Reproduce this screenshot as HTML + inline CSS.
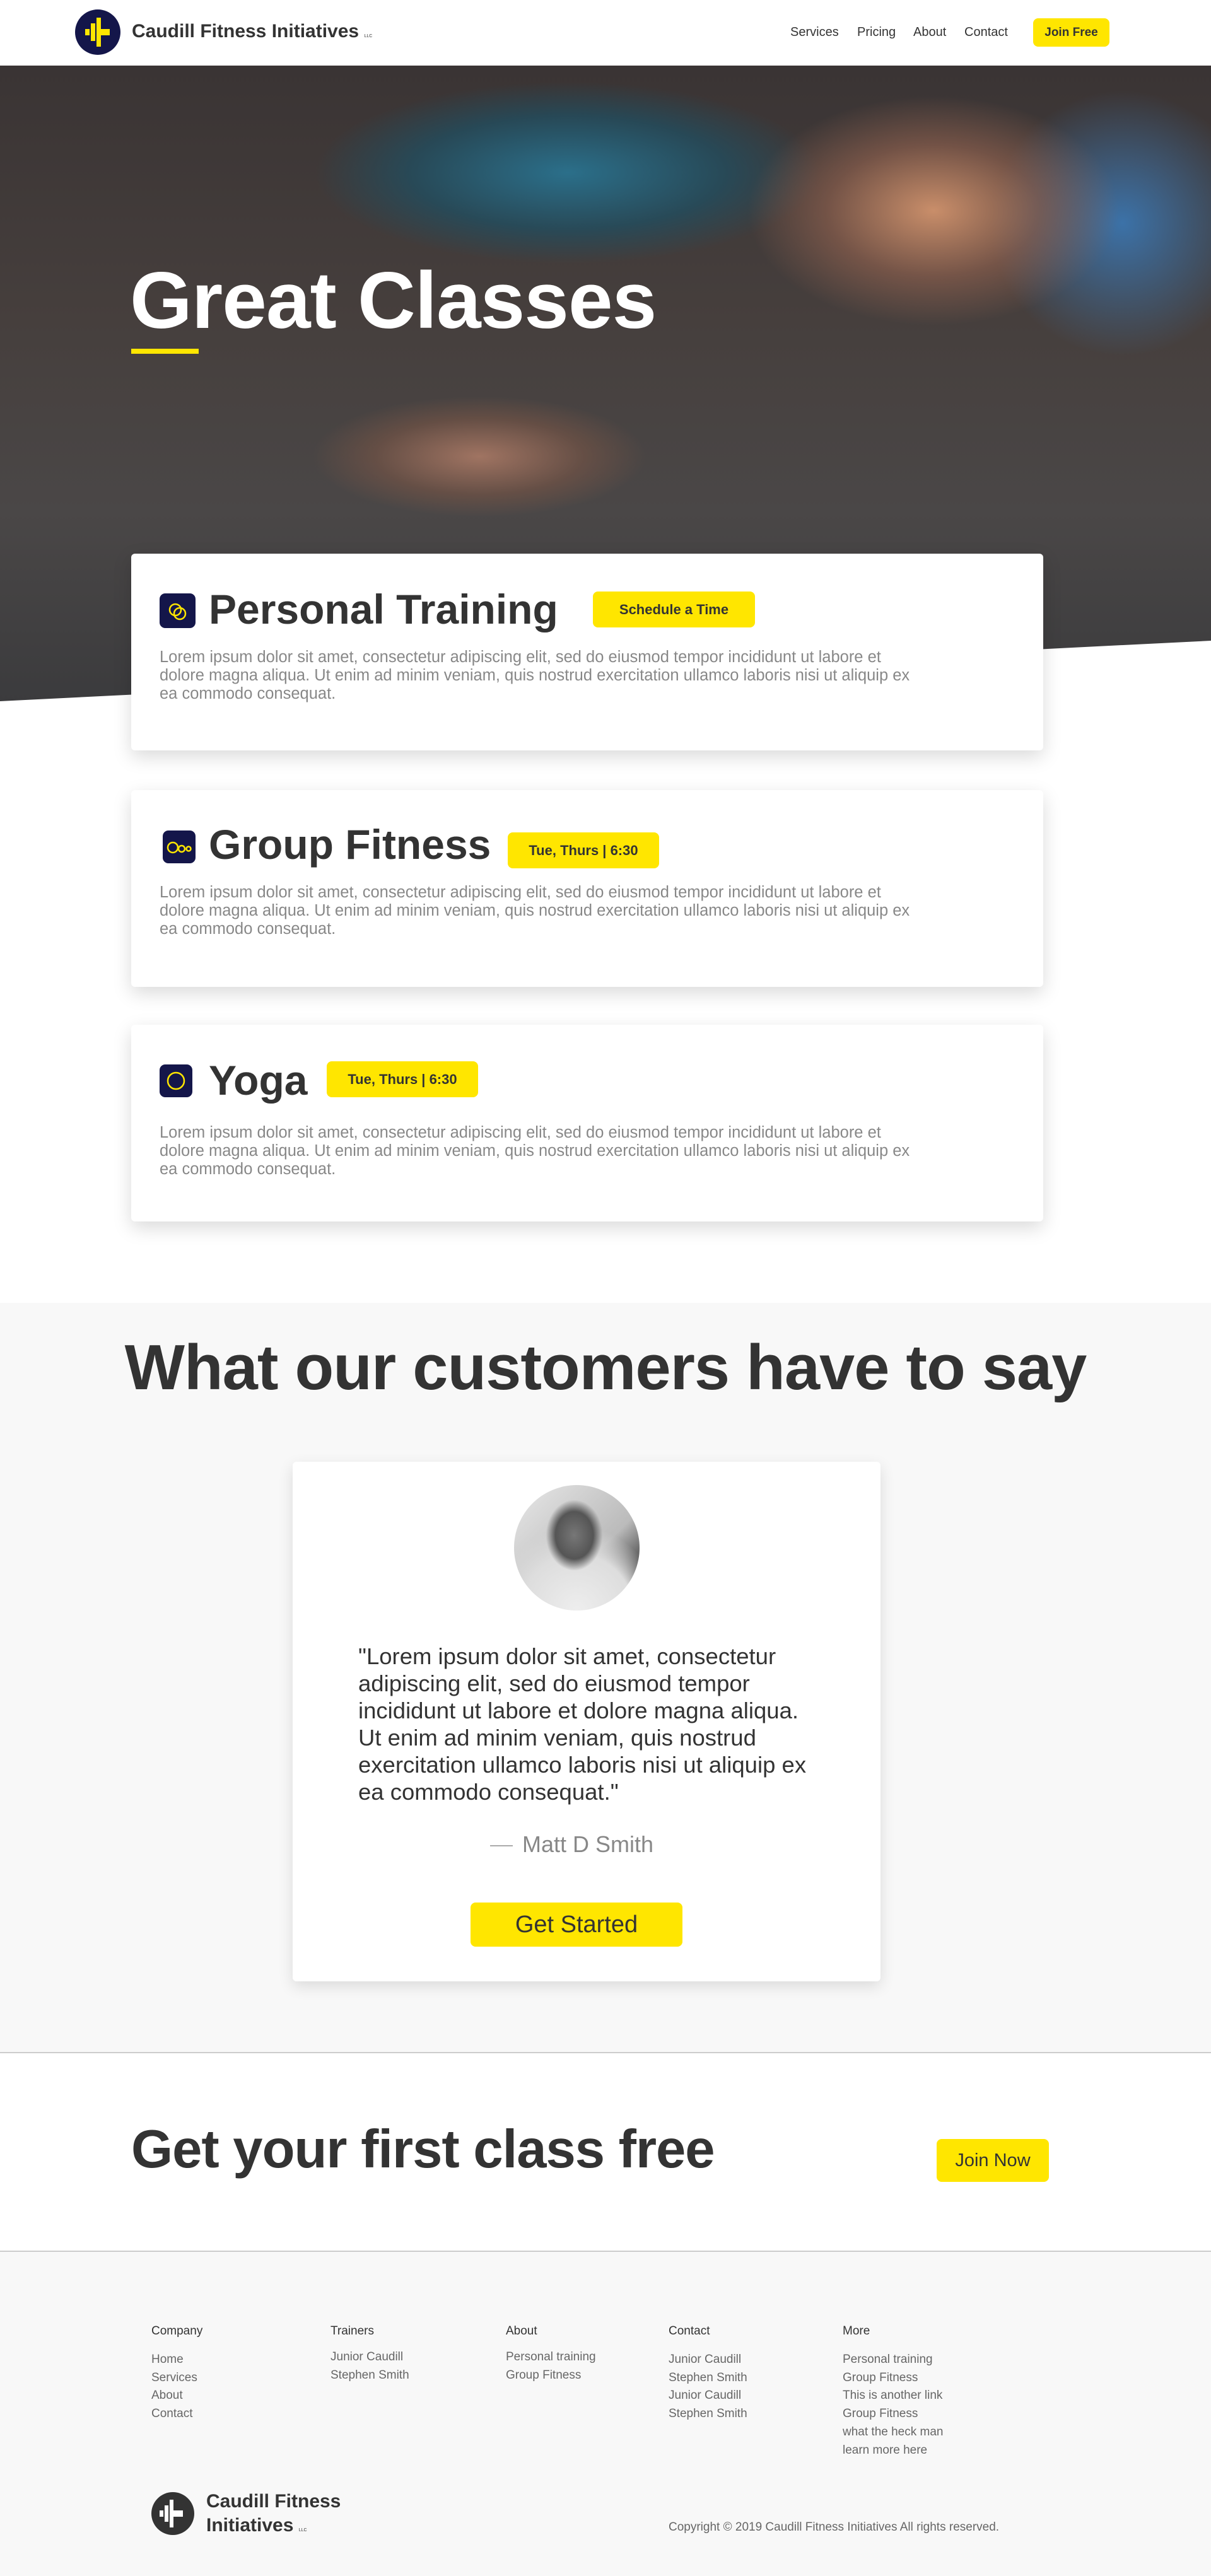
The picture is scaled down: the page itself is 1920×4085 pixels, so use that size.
<!DOCTYPE html>
<html><head><meta charset="utf-8">
<style>
*{margin:0;padding:0;box-sizing:border-box}
body{width:1920px;height:4085px;font-family:"Liberation Sans",sans-serif;color:#333;background:#fff;position:relative;overflow:hidden}
.abs{position:absolute}
.nav{left:0;top:0;width:1920px;height:104px;background:#fff}
.navlink{font-size:20px;color:#333;top:40px}
.btn{background:#ffe600;border-radius:8px;color:#333;display:flex;align-items:center;justify-content:center}
.hero{left:0;top:104px;width:1920px;height:1010px;clip-path:polygon(0 0,100% 0,100% 912px,0 1008px);
background:
radial-gradient(ellipse 420px 260px at 1480px 230px,#c98e6a 0%,rgba(150,100,80,.6) 40%,transparent 70%),
radial-gradient(ellipse 500px 180px at 900px 170px,#2b6f8a 0%,rgba(30,80,100,.7) 50%,transparent 80%),
radial-gradient(ellipse 330px 120px at 760px 620px,#a07462 0%,rgba(120,85,70,.6) 50%,transparent 80%),
radial-gradient(ellipse 300px 300px at 1780px 250px,#3c72a8 0%,transparent 70%),
linear-gradient(180deg,#3a3434 0%,#463f3d 40%,#4a4747 70%,#3b3b3d 100%)}
.card{left:208px;width:1446px;height:312px;background:#fff;border-radius:6px;box-shadow:0 10px 30px rgba(0,0,0,.15)}
.card h2{position:absolute;left:123px;font-size:66px;font-weight:bold;color:#333;line-height:1}
.card p{position:absolute;left:45px;top:150px;width:1200px;font-size:25.5px;line-height:29px;color:#888}
.icon{position:absolute;left:45px;width:57px;height:55px;background:#14164a;border-radius:9px}
.tag{position:absolute;height:57px;font-size:22px;font-weight:bold}
.foot h4{font-size:19px;font-weight:normal;color:#333;position:absolute}
.foot div.col{position:absolute;top:3728px;font-size:19px;line-height:28.7px;color:#666}
</style></head><body>
<div class="abs nav">
 <svg class="abs" style="left:119px;top:15px" width="72" height="72" viewBox="0 0 72 72"><circle cx="36" cy="36" r="36" fill="#14164a"/><rect x="16" y="31" width="7" height="10" fill="#ffe600"/><rect x="25" y="22" width="7" height="28" fill="#ffe600"/><rect x="34" y="13" width="7" height="46" fill="#ffe600"/><rect x="41" y="31" width="14" height="10" fill="#ffe600"/></svg>
 <div class="abs" style="left:209px;top:33px;font-size:30px;font-weight:bold;color:#333">Caudill Fitness Initiatives <span style="font-size:7px;font-weight:normal">LLC</span></div>
 <div class="abs navlink" style="left:1253px">Services</div>
 <div class="abs navlink" style="left:1359px">Pricing</div>
 <div class="abs navlink" style="left:1448px">About</div>
 <div class="abs navlink" style="left:1529px">Contact</div>
 <div class="abs btn" style="left:1638px;top:29px;width:121px;height:45px;font-size:19px;font-weight:bold">Join Free</div>
</div>
<div class="abs hero"></div>
<div class="abs" style="left:206px;top:403px;font-size:127px;font-weight:bold;color:#fff;letter-spacing:-1px">Great Classes</div>
<div class="abs" style="left:208px;top:553px;width:107px;height:8px;background:#ffe600"></div>

<div class="abs card" style="top:878px">
 <div class="icon" style="top:63px"><svg width="57" height="55"><circle cx="25" cy="26" r="9" fill="none" stroke="#ffe600" stroke-width="2.5"/><circle cx="32" cy="32" r="9" fill="none" stroke="#ffe600" stroke-width="2.5"/></svg></div>
 <h2 style="top:55px">Personal Training</h2>
 <div class="btn tag" style="left:732px;top:60px;width:257px">Schedule a Time</div>
 <p>Lorem ipsum dolor sit amet, consectetur adipiscing elit, sed do eiusmod tempor incididunt ut labore et dolore magna aliqua. Ut enim ad minim veniam, quis nostrud exercitation ullamco laboris nisi ut aliquip ex ea commodo consequat.</p>
</div>
<div class="abs card" style="top:1253px">
 <div class="icon" style="top:64px;left:50px;width:52px;height:52px"><svg width="52" height="52"><circle cx="16" cy="27" r="8" fill="none" stroke="#ffe600" stroke-width="2.5"/><circle cx="30" cy="29" r="5" fill="none" stroke="#ffe600" stroke-width="2.5"/><circle cx="41" cy="29" r="3.5" fill="none" stroke="#ffe600" stroke-width="2.5"/></svg></div>
 <h2 style="top:53px">Group Fitness</h2>
 <div class="btn tag" style="left:597px;top:67px;width:240px">Tue, Thurs | 6:30</div>
 <p style="top:148px">Lorem ipsum dolor sit amet, consectetur adipiscing elit, sed do eiusmod tempor incididunt ut labore et dolore magna aliqua. Ut enim ad minim veniam, quis nostrud exercitation ullamco laboris nisi ut aliquip ex ea commodo consequat.</p>
</div>
<div class="abs card" style="top:1625px">
 <div class="icon" style="top:63px;width:52px;height:52px"><svg width="52" height="52"><circle cx="26" cy="26" r="13" fill="none" stroke="#ffe600" stroke-width="2.5"/></svg></div>
 <h2 style="top:55px">Yoga</h2>
 <div class="btn tag" style="left:310px;top:58px;width:240px">Tue, Thurs | 6:30</div>
 <p style="top:157px">Lorem ipsum dolor sit amet, consectetur adipiscing elit, sed do eiusmod tempor incididunt ut labore et dolore magna aliqua. Ut enim ad minim veniam, quis nostrud exercitation ullamco laboris nisi ut aliquip ex ea commodo consequat.</p>
</div>

<div class="abs" style="left:0;top:2066px;width:1920px;height:1190px;background:#f8f8f8;border-bottom:2px solid #ccc"></div>
<div class="abs" style="left:0;top:2112px;width:1920px;text-align:center;font-size:101px;font-weight:bold;color:#333;letter-spacing:-1px">What our customers have to say</div>
<div class="abs" style="left:464px;top:2318px;width:932px;height:824px;background:#fff;border-radius:6px;box-shadow:0 8px 24px rgba(0,0,0,.12)"></div>
<div class="abs" style="left:815px;top:2355px;width:199px;height:199px;border-radius:50%;background:radial-gradient(ellipse 60px 75px at 48% 40%,#777 0%,#555 50%,transparent 75%),radial-gradient(circle at 50% 100%,#eee 0%,#ddd 40%,transparent 60%),linear-gradient(135deg,#e8e8e8,#bbb 60%,#222 90%)"></div>
<div class="abs" style="left:568px;top:2605px;width:728px;font-size:36.5px;line-height:43px;color:#333">"Lorem ipsum dolor sit amet, consectetur adipiscing elit, sed do eiusmod tempor incididunt ut labore et dolore magna aliqua. Ut enim ad minim veniam, quis nostrud exercitation ullamco laboris nisi ut aliquip ex ea commodo consequat."</div>
<div class="abs" style="left:777px;top:2904px;font-size:36px;color:#888"><span style="display:inline-block;width:36px;height:2px;background:#aaa;vertical-align:middle;margin-right:15px"></span>Matt D Smith</div>
<div class="abs btn" style="left:746px;top:3017px;width:336px;height:70px;font-size:38px">Get Started</div>

<div class="abs" style="left:208px;top:3360px;font-size:85px;font-weight:bold;color:#333;letter-spacing:-1px">Get your first class free</div>
<div class="abs btn" style="left:1485px;top:3392px;width:178px;height:68px;font-size:29px">Join Now</div>

<div class="abs foot" style="left:0;top:3569px;width:1920px;height:516px;background:#f8f8f8;border-top:2px solid #ccc"></div>
<div class="foot">
<h4 style="left:240px;top:3686px">Company</h4>
<h4 style="left:524px;top:3686px">Trainers</h4>
<h4 style="left:802px;top:3686px">About</h4>
<h4 style="left:1060px;top:3686px">Contact</h4>
<h4 style="left:1336px;top:3686px">More</h4>
<div class="col" style="left:240px">Home<br>Services<br>About<br>Contact</div>
<div class="col" style="left:524px;top:3724px">Junior Caudill<br>Stephen Smith</div>
<div class="col" style="left:802px;top:3724px">Personal training<br>Group Fitness</div>
<div class="col" style="left:1060px">Junior Caudill<br>Stephen Smith<br>Junior Caudill<br>Stephen Smith</div>
<div class="col" style="left:1336px">Personal training<br>Group Fitness<br>This is another link<br>Group Fitness<br>what the heck man<br>learn more here</div>
</div>
<svg class="abs" style="left:240px;top:3952px" width="68" height="68" viewBox="0 0 68 68"><circle cx="34" cy="34" r="34" fill="#333"/><rect x="13" y="29" width="6" height="10" fill="#fff"/><rect x="21" y="21" width="6" height="26" fill="#fff"/><rect x="29" y="12" width="6" height="44" fill="#fff"/><rect x="35" y="29" width="15" height="10" fill="#fff"/></svg>
<div class="abs" style="left:327px;top:3948px;font-size:30px;font-weight:bold;line-height:38px;color:#333">Caudill Fitness<br>Initiatives <span style="font-size:7px;font-weight:normal">LLC</span></div>
<div class="abs" style="left:1060px;top:3997px;font-size:19px;color:#666">Copyright © 2019 Caudill Fitness Initiatives All rights reserved.</div>
</body></html>
